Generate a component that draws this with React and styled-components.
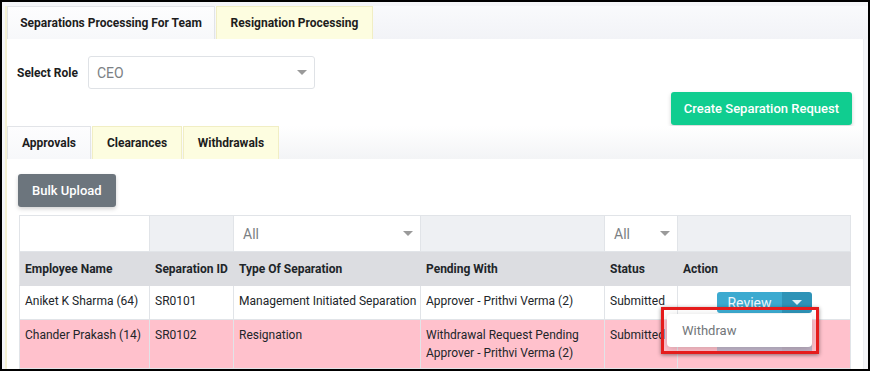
import React from 'react';
import styled, { createGlobalStyle } from 'styled-components';

const GlobalStyle = createGlobalStyle`
  * { box-sizing: border-box; }
  body {
    margin: 0;
    font-family: Roboto, "Liberation Sans", Arial, sans-serif;
    color: #212529;
  }
`;

const Frame = styled.div`
  width: 870px;
  height: 371px;
  border: 2px solid #000;
  overflow: hidden;
  background: #f4f5f8;
  padding: 4px 0 0 3px;
  display: flex;
`;

const Shell = styled.div`
  flex: 1;
  display: flex;
  flex-direction: column;
  border-left: 2px solid #f4f1d2;
`;

const TabBar = styled.div`
  display: flex;
  height: 33px;
  flex-shrink: 0;
  background: linear-gradient(#f9fafc, #f2f3f7);
`;

const Tab = styled.div`
  width: ${(p) => p.$w}px;
  display: flex;
  align-items: center;
  justify-content: center;
  font-size: 12px;
  font-weight: 700;
  color: #1d1d1d;
  margin-right: 1px;
  border: 1px solid ${(p) => (p.$active ? '#e2e4e8' : '#f1eec4')};
  border-bottom: none;
  background: ${(p) => (p.$active ? 'linear-gradient(#fdfdfe, #f7f8fa)' : '#fdfde0')};
`;

const Panel = styled.div`
  flex: 1;
  background: #fff;
  margin-right: 6px;
  border-right: 1px solid #eceef2;
  display: flex;
  flex-direction: column;
`;

const RoleRow = styled.div`
  display: flex;
  align-items: center;
  gap: 10px;
  padding: 17px 10px 0;
`;

const Label = styled.span`
  font-size: 12px;
  font-weight: 700;
  color: #1d1d1d;
`;

const Select = styled.div`
  width: ${(p) => p.$w}px;
  height: ${(p) => p.$h}px;
  display: flex;
  align-items: center;
  justify-content: space-between;
  padding: 0 ${(p) => p.$pr}px 0 ${(p) => p.$pl}px;
  border: ${(p) => (p.$bordered ? '1px solid #dfe2e6' : 'none')};
  border-radius: 3px;
  background: #fff;
  font-size: 14px;
  color: #7b7f84;
`;

const Caret = styled.span`
  width: 0;
  height: 0;
  border-left: 5px solid transparent;
  border-right: 5px solid transparent;
  border-top: 5px solid ${(p) => p.$color || '#9a9a9a'};
`;

const ActionRow = styled.div`
  display: flex;
  justify-content: flex-end;
  padding: 3px 11px 0 0;
`;

const Button = styled.button`
  height: 33px;
  padding: 0 ${(p) => p.$px}px;
  border: none;
  border-radius: 3px;
  font-family: inherit;
  font-size: 13px;
  font-weight: 500;
  color: #fff;
  background: ${(p) => p.$bg};
  box-shadow: 0 2px 4px rgba(0, 0, 0, 0.18);
`;

const InnerTabBar = styled(TabBar)`
  margin-top: 1px;
  background: linear-gradient(#ffffff, #f3f4f6);
`;

const InnerPanel = styled.div`
  flex: 1;
  background: #fff;
  padding: 15px 12px 0 11px;
`;

const Table = styled.table`
  margin: 8px 0 0 1px;
  width: 831px;
  border-collapse: collapse;
  table-layout: fixed;
  font-size: 12px;
`;

const FilterCell = styled.td`
  height: 35px;
  padding: 0;
  border: 1px solid #e1e4e8;
  background: ${(p) => (p.$open ? '#fff' : '#eef0f3')};
`;

const Th = styled.th`
  height: 34px;
  padding: 0 5px;
  text-align: left;
  font-weight: 700;
  white-space: nowrap;
  background: #dcdde1;
  border: 1px solid #dcdde1;
  border-left-color: #e3e4e7;
`;

const Tr = styled.tr`
  background: ${(p) => (p.$pink ? '#ffc1cc' : '#fff')};
`;

const Td = styled.td`
  padding: 6px 5px;
  line-height: 18px;
  vertical-align: top;
  border: 1px solid #e1e4e8;
  text-align: ${(p) => (p.$center ? 'center' : 'left')};
  white-space: nowrap;
`;

const Group = styled.div`
  position: relative;
  display: inline-flex;
  height: 21px;
  margin: ${(p) => (p.$faded ? '7px 0 0 1px' : '0 0 0 1px')};
  opacity: ${(p) => (p.$faded ? 0.3 : 1)};
`;

const ReviewBtn = styled.div`
  width: 65px;
  display: flex;
  align-items: center;
  justify-content: center;
  font-size: 14px;
  color: #eef7fb;
  background: #3caad0;
  border-radius: 3px 0 0 3px;
`;

const CaretBtn = styled.div`
  width: 30px;
  display: flex;
  align-items: center;
  justify-content: center;
  background: #2e93b7;
  border-radius: 0 3px 3px 0;
`;

const Menu = styled.div`
  position: absolute;
  left: -50px;
  top: 22px;
  width: 145px;
  height: 33px;
  z-index: 5;
  padding-left: 15px;
  line-height: 33px;
  text-align: left;
  font-size: 13px;
  color: #727679;
  background: #fff;
  border-radius: 4px;
  box-shadow: 0 2px 8px rgba(0, 0, 0, 0.18);
`;

const Highlight = styled.div`
  position: absolute;
  left: -56px;
  top: 15px;
  width: 158px;
  height: 47px;
  z-index: 6;
  border: 3px solid #e51c1c;
  box-shadow: 0 1px 4px rgba(0, 0, 0, 0.45);
  pointer-events: none;
`;

const columns = [130, 84, 187, 184, 73, 173];

const rows = [
  {
    name: 'Aniket K Sharma (64)',
    id: 'SR0101',
    type: 'Management Initiated Separation',
    pending: ['Approver - Prithvi Verma (2)'],
    status: 'Submitted',
    open: true,
  },
  {
    name: 'Chander Prakash (14)',
    id: 'SR0102',
    type: 'Resignation',
    pending: ['Withdrawal Request Pending', 'Approver - Prithvi Verma (2)'],
    status: 'Submitted',
    pink: true,
  },
];

// the second row's button sits under the open menu; only its lower edge shows
const ReviewGroup = ({ open, faded }) => (
  <Group $faded={faded}>
    <ReviewBtn>{faded ? '' : 'Review'}</ReviewBtn>
    <CaretBtn>
      <Caret $color='#dff0f6' />
    </CaretBtn>
    {open && (
      <>
        <Menu>Withdraw</Menu>
        <Highlight />
      </>
    )}
  </Group>
);

const App = () => {
  return (
    <>
      <GlobalStyle />
      <Frame>
        <Shell>
          <TabBar>
            <Tab $active $w={208}>Separations Processing For Team</Tab>
            <Tab $w={157}>Resignation Processing</Tab>
          </TabBar>
          <Panel>
            <RoleRow>
              <Label>Select Role</Label>
              <Select $bordered $w={227} $h={33} $pl={8} $pr={7}>
                CEO
                <Caret />
              </Select>
            </RoleRow>
            <ActionRow>
              <Button $bg='#10cd90' $px={13}>
                Create Separation Request
              </Button>
            </ActionRow>
            <InnerTabBar>
              <Tab $active $w={84}>Approvals</Tab>
              <Tab $w={90}>Clearances</Tab>
              <Tab $w={96}>Withdrawals</Tab>
            </InnerTabBar>
            <InnerPanel>
              <Button $bg='#6c757d' $px={14}>
                Bulk Upload
              </Button>
              <Table>
                <colgroup>
                  {columns.map((w, i) => (
                    <col key={i} style={{ width: w }} />
                  ))}
                </colgroup>
                <tbody>
                  <tr>
                    <FilterCell $open />
                    <FilterCell />
                    <FilterCell $open>
                      <Select $w={186} $h={35} $pl={9} $pr={7}>
                        All
                        <Caret />
                      </Select>
                    </FilterCell>
                    <FilterCell />
                    <FilterCell $open>
                      <Select $w={72} $h={35} $pl={9} $pr={7}>
                        All
                        <Caret />
                      </Select>
                    </FilterCell>
                    <FilterCell />
                  </tr>
                  <tr>
                    <Th>Employee Name</Th>
                    <Th>Separation ID</Th>
                    <Th>Type Of Separation</Th>
                    <Th>Pending With</Th>
                    <Th>Status</Th>
                    <Th>Action</Th>
                  </tr>
                  {rows.map((r) => (
                    <Tr key={r.id} $pink={r.pink}>
                      <Td>{r.name}</Td>
                      <Td>{r.id}</Td>
                      <Td>{r.type}</Td>
                      <Td>
                        {r.pending.map((line) => (
                          <div key={line}>{line}</div>
                        ))}
                      </Td>
                      <Td>{r.status}</Td>
                      <Td $center>
                        <ReviewGroup open={r.open} faded={r.pink} />
                      </Td>
                    </Tr>
                  ))}
                  <Tr>
                    <Td>&nbsp;</Td>
                    <Td />
                    <Td />
                    <Td />
                    <Td />
                    <Td />
                  </Tr>
                </tbody>
              </Table>
            </InnerPanel>
          </Panel>
        </Shell>
      </Frame>
    </>
  );
};

export default App;
